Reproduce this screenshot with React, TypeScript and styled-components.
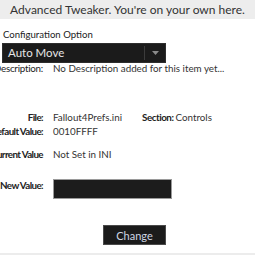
import React from "react";
import styled, { createGlobalStyle } from "styled-components";

const Global = createGlobalStyle`
  html, body { margin: 0; padding: 0; background: #ffffff; overflow: hidden; }
  body { font-family: Lato, "Open Sans", sans-serif; width: 255px; height: 255px; }
`;

const Page = styled.div`
  width: 255px;
  height: 255px;
  display: flex;
  flex-direction: column;
  overflow: hidden;
`;

const Header = styled.div`
  height: 19px;
  background: #ededed;
  color: #333;
  font-size: 12px;
  display: flex;
  align-items: center;
  justify-content: center;
  white-space: nowrap;
`;

const Body = styled.div`
  flex: 1;
  display: flex;
  flex-direction: column;
`;

const SectionLabel = styled.div`
  margin: 9px 0 0 3px;
  height: 14px;
  line-height: 14px;
  font-size: 9.6px;
  color: #222;
`;

const Dropdown = styled.div`
  margin: 1px 0 0 2px;
  width: 164px;
  height: 20px;
  box-sizing: border-box;
  background: #1b1b1b;
  border: 1px solid #2e2e2e;
  display: flex;
  align-items: center;
  color: #e6e6e6;
  font-size: 11.5px;
`;

const DropText = styled.span`
  flex: 1;
  padding-left: 5px;
  line-height: 18px;
`;

const DropSep = styled.span`
  width: 1px;
  height: 14px;
  background: #3c3c3c;
`;

const DropArrow = styled.span`
  width: 20px;
  display: flex;
  justify-content: center;
  align-items: center;
`;

const Row = styled.div<{ $top: number }>`
  margin-top: ${(p) => p.$top}px;
  display: grid;
  grid-template-columns: 43px auto;
  column-gap: 10px;
  align-items: start;
  font-size: 9.8px;
  line-height: 12px;
  color: #333;
  white-space: nowrap;
`;

const Label = styled.span<{ $bold?: boolean }>`
  display: flex;
  justify-content: flex-end;
  font-weight: ${(p) => (p.$bold ? 700 : 400)};
  letter-spacing: ${(p) => (p.$bold ? "-0.6px" : "-0.25px")};
  color: #222;
`;

const Value = styled.span`
  display: flex;
  gap: 20px;
`;

const Inline = styled.span`
  display: flex;
  gap: 2px;
`;

const Bold = styled.span`
  font-weight: 700;
  letter-spacing: -0.45px;
  color: #222;
`;

const TextBox = styled.div`
  width: 119px;
  height: 20px;
  box-sizing: border-box;
  background: #1c1c1c;
  border: 1px solid #9a9a9a;
`;

const ButtonRow = styled.div`
  margin-top: 26px;
  padding-left: 103px;
  display: flex;
`;

const Button = styled.button`
  width: 63px;
  height: 20px;
  box-sizing: border-box;
  background: #1b1b1b;
  border: 1px solid #4a4a4a;
  color: #cfd6e4;
  font-family: Lato, "Open Sans", sans-serif;
  font-size: 11px;
  padding: 0;
  line-height: 17px;
`;

const Footer = styled.div`
  margin-top: auto;
  height: 2px;
  background: #ececec;
`;

export default function App() {
  return (
    <Page>
      <Global />
      <Header>Advanced Tweaker. You're on your own here.</Header>
      <Body>
        <SectionLabel>Configuration Option</SectionLabel>
        <Dropdown>
          <DropText>Auto Move</DropText>
          <DropSep />
          <DropArrow>
            <svg width="7" height="4" viewBox="0 0 7 4">
              <path d="M0 0 L7 0 L3.5 4 Z" fill="#8a8a8a" />
            </svg>
          </DropArrow>
        </Dropdown>
        <Row $top={-1}>
          <Label>Description:</Label>
          <Value>No Description added for this item yet...</Value>
        </Row>
        <Row $top={37}>
          <Label $bold>File:</Label>
          <Value>
            <span>Fallout4Prefs.ini</span>
            <Inline>
              <Bold>Section:</Bold>
              <span>Controls</span>
            </Inline>
          </Value>
        </Row>
        <Row $top={2}>
          <Label $bold>Default Value:</Label>
          <Value>0010FFFF</Value>
        </Row>
        <Row $top={11}>
          <Label $bold>Current Value</Label>
          <Value>Not Set in INI</Value>
        </Row>
        <Row $top={19}>
          <Label $bold>New Value:</Label>
          <TextBox />
        </Row>
        <ButtonRow>
          <Button>Change</Button>
        </ButtonRow>
        <Footer />
      </Body>
    </Page>
  );
}
